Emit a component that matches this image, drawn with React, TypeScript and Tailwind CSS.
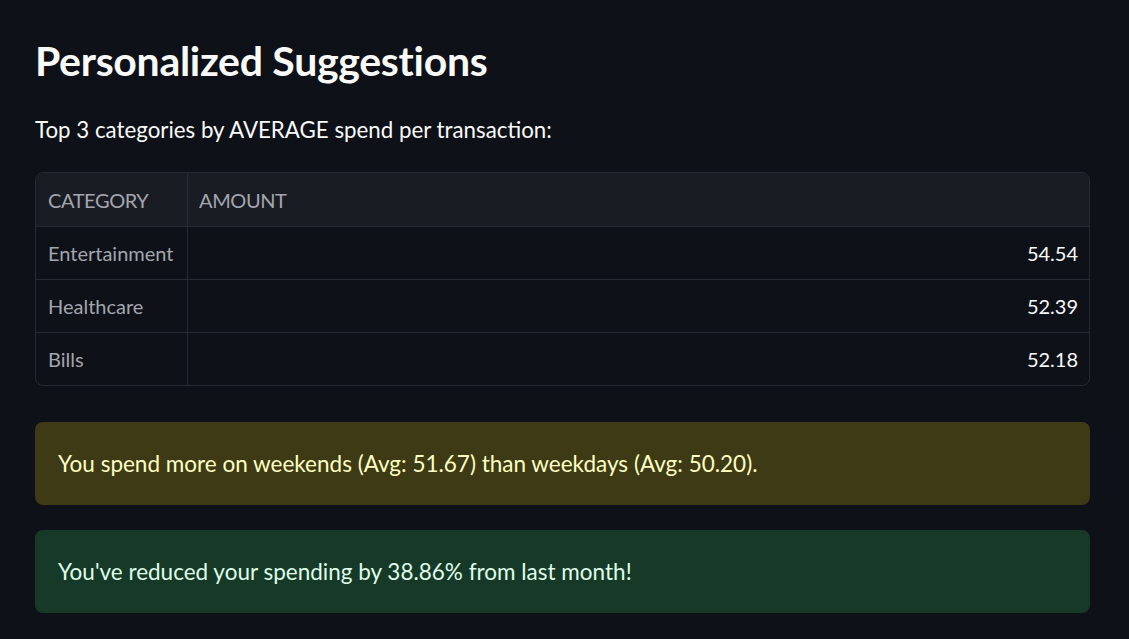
export default function App() {
  const rows = [
    { category: 'Entertainment', amount: '54.54' },
    { category: 'Healthcare', amount: '52.39' },
    { category: 'Bills', amount: '52.18' },
  ];

  return (
    <div className="min-h-[639px] bg-[#0e1117] pl-[35px] pr-[39px] pt-[36px] text-[#fafafa] font-['Lato',sans-serif]">
      <h1 className="text-[41px] font-bold leading-[1.2] tracking-[-0.3px]">Personalized Suggestions</h1>

      <p className="mt-[30px] text-[22.3px] leading-[30px]">
        Top 3 categories by AVERAGE spend per transaction:
      </p>

      {/* Table */}
      <div className="mt-[27px] overflow-hidden rounded-[8px] border border-[#272a33] text-[20px]">
        <div className="flex h-[53px] bg-[#1a1c24] text-[#a3a6ae]">
          <div className="flex w-[152px] items-center border-r border-[#272a33] px-[12px] tracking-[-0.4px]">CATEGORY</div>
          <div className="flex flex-1 items-center px-[11px] tracking-[-0.4px]">AMOUNT</div>
        </div>
        {rows.map((row) => (
          <div key={row.category} className="flex h-[53px] border-t border-[#272a33]">
            <div className="flex w-[152px] items-center border-r border-[#272a33] px-[12px] text-[#a3a6ae]">
              {row.category}
            </div>
            <div className="flex flex-1 items-center justify-end px-[11px]">{row.amount}</div>
          </div>
        ))}
      </div>

      {/* Alerts */}
      <div className="mt-[36px] flex h-[83px] items-center rounded-[8px] bg-[#3e3a16] px-[23px] text-[22.5px] text-[#ffffc2]">
        You spend more on weekends (Avg: 51.67) than weekdays (Avg: 50.20).
      </div>
      <div className="mt-[25px] flex h-[83px] items-center rounded-[8px] bg-[#173928] px-[23px] text-[22.5px] text-[#dffde9]">
        You&apos;ve reduced your spending by 38.86% from last month!
      </div>
    </div>
  );
}
